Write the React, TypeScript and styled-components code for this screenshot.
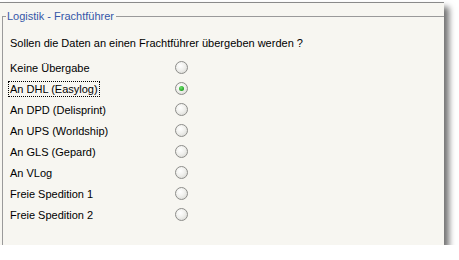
import React, { useState } from "react";
import styled, { createGlobalStyle } from "styled-components";

const GlobalStyle = createGlobalStyle`
  html, body {
    margin: 0;
    padding: 0;
    background: #ffffff;
  }
  body {
    font-family: "Liberation Sans", Arial, sans-serif;
    font-size: 11px;
    color: #000;
  }
`;

const options = [
  "Keine Übergabe",
  "An DHL (Easylog)",
  "An DPD (Delisprint)",
  "An UPS (Worldship)",
  "An GLS (Gepard)",
  "An VLog",
  "Freie Spedition 1",
  "Freie Spedition 2",
];

export default function App() {
  const [selected, setSelected] = useState(1);

  return (
    <>
      <GlobalStyle />
      <Panel>
        <Group>
          <Legend>Logistik - Frachtführer</Legend>
          <Question>Sollen die Daten an einen Frachtführer übergeben werden ?</Question>
          <OptionList>
            {options.map((label, i) => (
              <OptionRow key={label} onClick={() => setSelected(i)}>
                <Label $focused={i === selected}>{label}</Label>
                <Radio $checked={i === selected} />
              </OptionRow>
            ))}
          </OptionList>
        </Group>
      </Panel>
    </>
  );
}

const Panel = styled.div`
  width: 444px;
  height: 242px;
  margin-top: 2px;
  border-top: 1px solid #8a8a8a;
  background: #f7f6f1;
  box-shadow: 5px 5px 6px rgba(0, 0, 0, 0.55);
  overflow: hidden;
`;

const Group = styled.fieldset`
  margin: 6px 0 0 2px;
  width: 520px;
  height: 300px;
  padding: 0 0 0 7px;
  border: 1px solid #9a9a9a;
  box-sizing: border-box;
`;

const Legend = styled.legend`
  margin-left: -4px;
  padding: 0 2px 0 1px;
  color: #3557a8;
  font-size: 11px;
  line-height: 14px;
`;

const Question = styled.div`
  margin-top: 10px;
  height: 21px;
  line-height: 21px;
`;

const OptionList = styled.div`
  display: flex;
  flex-direction: column;
  margin-top: 3px;
`;

const OptionRow = styled.div`
  display: grid;
  grid-template-columns: 165px 13px;
  align-items: center;
  height: 21px;
`;

const Label = styled.span<{ $focused: boolean }>`
  justify-self: start;
  line-height: 14px;
  padding: 0 1px;
  margin-left: -2px;
  border: 1px dotted ${(p) => (p.$focused ? "#000" : "transparent")};
`;

const Radio = styled.span<{ $checked: boolean }>`
  position: relative;
  width: 13px;
  height: 13px;
  box-sizing: border-box;
  border-radius: 50%;
  border: 1px solid #8d8d8a;
  background: radial-gradient(circle at 40% 35%, #ffffff 0%, #f0f0ed 45%, #d3d3cf 100%);

  &::after {
    content: "";
    display: ${(p) => (p.$checked ? "block" : "none")};
    position: absolute;
    left: 3px;
    top: 3px;
    width: 5px;
    height: 5px;
    border-radius: 50%;
    background: radial-gradient(circle at 40% 35%, #6fe36f 0%, #21a121 70%);
  }
`;
